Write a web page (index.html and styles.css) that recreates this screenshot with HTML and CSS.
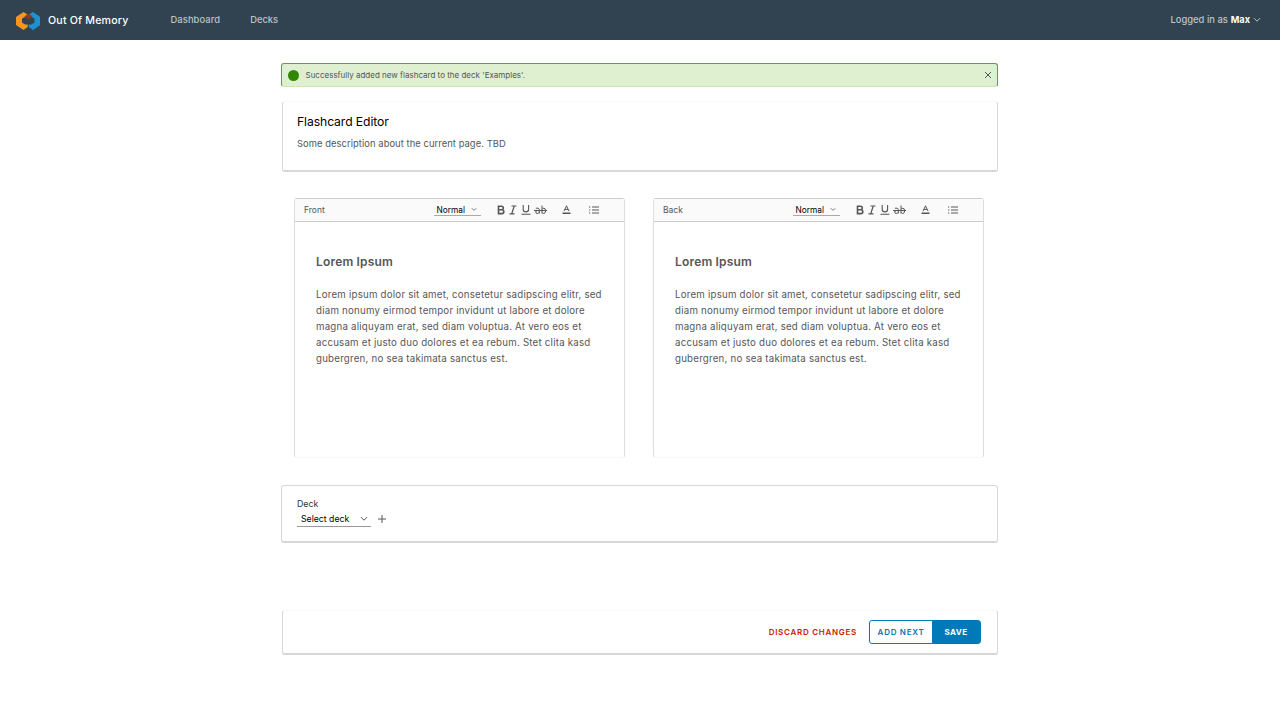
FILE: index.html
```html
<!DOCTYPE html>
<html lang="en">
<head>
<meta charset="utf-8">
<title>Out Of Memory</title>
<link rel="stylesheet" href="styles.css">
</head>
<body>
<svg class="sprite" aria-hidden="true">
  <symbol id="chevron" viewBox="0 0 8 6"><path d="M1 1.200 4 4.200 7 1.200" fill="none" stroke="currentColor" stroke-width="1"/></symbol>
  <symbol id="bold" viewBox="0 0 8 10"><path d="M1.500 1.200h3a1.800 1.800 0 0 1 0 3.600h-3zM1.500 4.800h3.400a1.900 1.900 0 0 1 0 3.800H1.500z" fill="none" stroke="currentColor" stroke-width="1.600"/></symbol>
  <symbol id="italic" viewBox="0 0 8 10"><path d="M2.500 1h5M.5 8.800h5M5.200 1 2.800 8.800" fill="none" stroke="currentColor" stroke-width="1.200"/></symbol>
  <symbol id="underline" viewBox="0 0 10 10"><path d="M2.200 0v4.200a2.700 2.700 0 0 0 5.400 0V0M.5 9.300h9" fill="none" stroke="currentColor" stroke-width="1.100"/></symbol>
  <symbol id="strike" viewBox="0 0 13 10"><path d="M1.800 3.200h2.100q1.400 0 1.400 1.400v3.900M5.300 5.600H3.200a1.400 1.400 0 0 0 0 2.900q1.600 0 2.100-1.200M8 .5v8M8 4.400q.6-1.200 1.900-1.200 1.700 0 1.700 2.600T9.800 8.500Q8.600 8.500 8 7.300M0 5.500h13" fill="none" stroke="currentColor" stroke-width="1"/></symbol>
  <symbol id="color" viewBox="0 0 9 10"><path d="M2 6.200 4.500 .8 7 6.200M2.900 4.400h3.200" fill="none" stroke="currentColor" stroke-width="1"/><path d="M.5 7.500h8v1.500h-8z" fill="currentColor"/></symbol>
  <symbol id="list" viewBox="0 0 10 8"><path d="M3 1h7M3 4h7M3 7h7M0 1h1.300M0 4h1.300M0 7h1.300" fill="none" stroke="currentColor" stroke-width="1"/></symbol>
</svg>

<header class="header">
  <svg class="logo" viewBox="0 0 24 18">
    <path d="M11 2.300 7.500 0 0 5v8l7.500 5 4.200-3V12.500L9 12.500 6 10.500v-4L11 4z" fill="#f3981d"/>
    <path d="M13.500 2.300 17 0l7.200 5v8L17 18l-4.200-3V12.500h2.700l3-2v-4L13.500 4z" fill="#1e90cd"/>
    <path d="m8.500 4.500 4-3 4 3-4 3z" fill="#8b3b20"/>
  </svg>
  <span class="brand">Out Of Memory</span>
  <nav class="nav"><a class="nav-dashboard">Dashboard</a><a class="nav-decks">Decks</a></nav>
  <div class="user"><span class="user-label">Logged in as</span><b class="user-name">Max</b><svg class="chevron"><use href="#chevron"/></svg></div>
</header>

<main class="main">
  <div class="alert">
    <span class="alert-dot"></span>
    <span class="alert-text">Successfully added new flashcard to the deck 'Examples'.</span>
    <svg class="alert-close" viewBox="0 0 8 8"><path d="m1 1 6 6M7 1 1 7" fill="none" stroke="currentColor"/></svg>
  </div>

  <section class="card intro">
    <h1 class="title">Flashcard Editor</h1>
    <p class="description">Some description about the current page. TBD</p>
  </section>

  <div class="editors">
    <section class="editor">
      <div class="toolbar">
        <span class="side">Front</span>
        <span class="format"><span class="format-text">Normal</span><svg class="chevron-small"><use href="#chevron"/></svg></span>
        <svg class="i-bold"><use href="#bold"/></svg><svg class="i-italic"><use href="#italic"/></svg><svg class="i-underline"><use href="#underline"/></svg><svg class="i-strike"><use href="#strike"/></svg><svg class="i-color"><use href="#color"/></svg><svg class="i-list"><use href="#list"/></svg>
      </div>
      <div class="content">
        <h2 class="content-title">Lorem Ipsum</h2>
        <p class="content-text">Lorem ipsum dolor sit amet, consetetur sadipscing elitr, sed<br>diam nonumy eirmod tempor invidunt ut labore et dolore<br>magna aliquyam erat, sed diam voluptua. At vero eos et<br>accusam et justo duo dolores et ea rebum. Stet clita kasd<br>gubergren, no sea takimata sanctus est.</p>
      </div>
    </section>
    <section class="editor">
      <div class="toolbar">
        <span class="side">Back</span>
        <span class="format"><span class="format-text">Normal</span><svg class="chevron-small"><use href="#chevron"/></svg></span>
        <svg class="i-bold"><use href="#bold"/></svg><svg class="i-italic"><use href="#italic"/></svg><svg class="i-underline"><use href="#underline"/></svg><svg class="i-strike"><use href="#strike"/></svg><svg class="i-color"><use href="#color"/></svg><svg class="i-list"><use href="#list"/></svg>
      </div>
      <div class="content">
        <h2 class="content-title">Lorem Ipsum</h2>
        <p class="content-text">Lorem ipsum dolor sit amet, consetetur sadipscing elitr, sed<br>diam nonumy eirmod tempor invidunt ut labore et dolore<br>magna aliquyam erat, sed diam voluptua. At vero eos et<br>accusam et justo duo dolores et ea rebum. Stet clita kasd<br>gubergren, no sea takimata sanctus est.</p>
      </div>
    </section>
  </div>

  <section class="card deck">
    <span class="deck-label">Deck</span>
    <div class="deck-row">
      <span class="deck-select"><span class="deck-value">Select deck</span><svg class="chevron deck-chevron"><use href="#chevron"/></svg></span>
      <svg class="plus" viewBox="0 0 8 8"><path d="M4 0v8M0 4h8" fill="none" stroke="currentColor" stroke-width="1"/></svg>
    </div>
  </section>

  <section class="card actions">
    <span class="discard">DISCARD CHANGES</span>
    <div class="buttons"><span class="add-next">ADD NEXT</span><span class="save">SAVE</span></div>
  </section>
</main>
</body>
</html>
```
FILE: styles.css
```css
* { box-sizing: border-box; }
body { margin: 0; background: #fff; color: #565656; font-family: Inter, "Open Sans", sans-serif; font-size: 10px; }
h1, h2, p { margin: 0; font-weight: 400; }
svg { display: block; flex: none; }
span, a, b { white-space: nowrap; }
.sprite { position: absolute; width: 0; height: 0; }

.header { display: flex; align-items: center; height: 40px; padding: 0 19px 0 16px; background: #314351; line-height: 16px; }
.logo { width: 24px; height: 18px; margin-top: 1px; }
.brand { width: 122px; padding: 1px 0 0 8px; color: #fff; font-size: 10.600px; font-weight: 500; letter-spacing: .2px; }
.nav { display: flex; gap: 30px; padding: 0 0 0 8.500px; color: #b9c2c9; font-weight: 500; font-size: 9.400px; }
.nav-dashboard { letter-spacing: .08px; }
.user { display: flex; align-items: center; margin-left: auto; font-size: 9.400px; font-weight: 500; color: #bcc5cb; }
.user-name { margin: 0 3px; color: #fff; font-size: 9.200px; }
.chevron { width: 8px; height: 6px; }

.main { display: flex; flex-direction: column; width: 717px; margin: 23px 0 0 281px; }
.alert { display: flex; align-items: center; height: 24px; padding: 0 5px 0 6px; border: 1px solid #62a420; border-bottom-color: #cbe7b4; border-radius: 3px; background: #dff0d0; font-size: 8px; }
.alert-dot { width: 11px; height: 11px; margin-right: 6.500px; border-radius: 50%; background: #318700; }
.alert-close { width: 8px; height: 8px; margin-left: auto; }

.card { border: 1px solid #d7d7d7; border-radius: 3px; border-bottom-width: 2px; }
.intro { height: 71px; margin: 14px 0 0 1px; padding: 11px 14px; border-top-color: #fafafa; }
.title { color: #000; font-size: 12.200px; line-height: 18px; letter-spacing: -.1px; }
.description { margin-top: 5px; line-height: 16px; font-size: 9.400px; letter-spacing: .06px; }

.editors { display: flex; gap: 28px; margin: 26px 14px 0 13px; }
.editor { flex: 1; height: 260px; border: 1px solid #ddd; border-top-color: #ccc; border-bottom-color: #f7f7f7; border-radius: 3px; }
.toolbar { display: flex; align-items: center; height: 23px; padding-left: 9px; border-bottom: 1px solid #ccc; background: #fafafa; }
.side { width: 129.500px; font-size: 8.500px; }
.format { display: flex; align-items: center; justify-content: space-between; width: 47.500px; height: 12px; padding: 0 4px 0 3px; margin-right: 16px; border-bottom: 1px solid #aaa; color: #000; font-size: 8.300px; }
.chevron-small { width: 6px; height: 5px; color: #565656; }
.i-bold { width: 8px; height: 10px; margin-right: 3.500px; }
.i-italic { width: 8px; height: 10px; margin-right: 4px; }
.i-underline { width: 10px; height: 10px; margin-right: 3.500px; }
.i-strike { width: 13px; height: 10px; margin-right: 15px; }
.i-color { width: 9px; height: 10px; margin-right: 18px; }
.i-list { width: 10px; height: 8px; }
.content { padding: 31px 21px; }
.content-title { font-size: 12px; line-height: 18px; font-weight: 600; letter-spacing: .18px; }
.content-text { margin-top: 16px; line-height: 16px; font-size: 9.700px; letter-spacing: .22px; white-space: nowrap; }

.deck { height: 58px; margin-top: 27px; padding: 12px 15px; }
.deck-label { display: block; font-size: 8.800px; line-height: 12px; color: #333; }
.deck-row { display: flex; align-items: center; gap: 6.500px; }
.deck-select { display: flex; align-items: center; justify-content: space-between; width: 74px; height: 17px; padding: 1px 3px 0 4px; border-bottom: 1px solid #999; color: #000; font-size: 8.700px; }
.deck-chevron { color: #565656; }
.plus { width: 8px; height: 8px; }

.actions { display: flex; align-items: center; justify-content: flex-end; gap: 12px; height: 45px; margin: 67px 0 0 1px; padding-right: 16px; border-top-color: #fafafa; font-size: 8px; font-weight: 600; letter-spacing: .72px; }
.discard { color: #c92100; }
.buttons { display: flex; width: 112px; height: 24px; border: 1px solid #0079b8; border-radius: 3px; line-height: 22px; text-align: center; }
.add-next { width: 62px; color: #0079b8; }
.save { flex: 1; background: #0079b8; color: #fff; font-weight: 700; letter-spacing: .4px; }
```
